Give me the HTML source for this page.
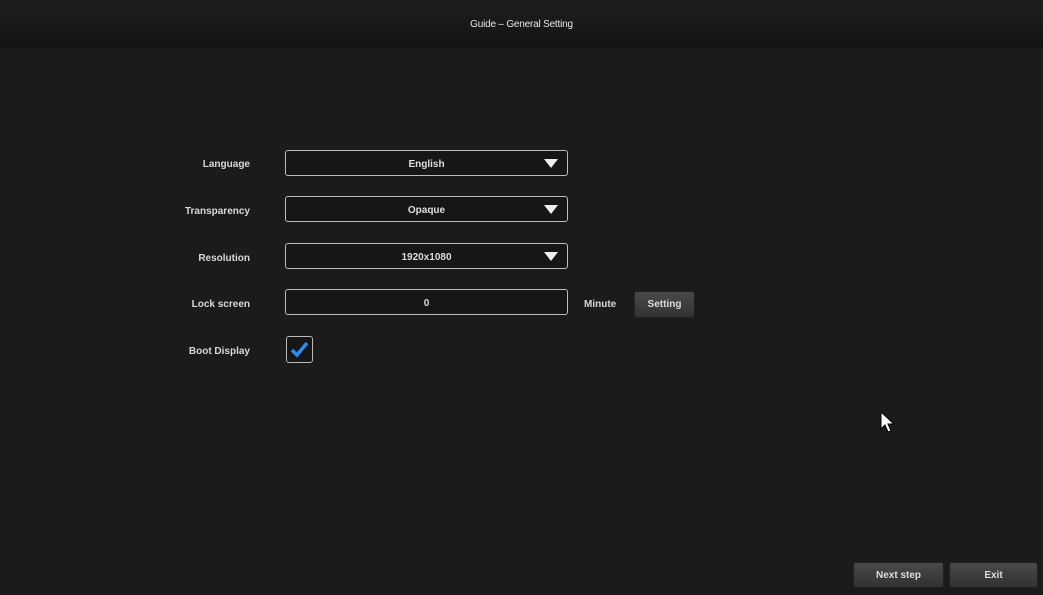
<!DOCTYPE html>
<html><head><style>
body{margin:0;width:1043px;height:595px;background:#1b1b1b;font-family:"Liberation Sans",sans-serif;color:#ddd;position:relative;overflow:hidden;font-size:10px}
.hdr{position:absolute;left:0;top:0;width:1043px;height:48px;background:linear-gradient(#1e1e1e,#131313);}
.hdr span{position:absolute;left:0;width:1043px;top:19px;text-align:center;font-size:10px;color:#e6e6e6;letter-spacing:-0.2px}
.lbl{position:absolute;right:793px;font-weight:bold;font-size:10px;color:#d8d8d8;text-align:right}
.fld{position:absolute;left:285px;width:281px;height:24px;border:1px solid #bbb;border-radius:3px;background:#161616;text-align:center;line-height:28px;font-weight:bold;color:#ddd}
.tri{position:absolute;right:9px;top:8px;width:0;height:0;border-left:7px solid transparent;border-right:7px solid transparent;border-top:9px solid #eee}
.btn{position:absolute;border-radius:3px;background:linear-gradient(#4a4a4a,#323232);border:1px solid #222;color:#ddd;font-weight:bold;text-align:center;font-size:10px}
.cb{position:absolute;left:286px;top:336px;width:25px;height:25px;border:1px solid #bbb;border-radius:3px;background:#161616}
</style></head><body>
<div class="hdr"><span>Guide – General Setting</span></div>
<div class="lbl" style="top:159px">Language</div>
<div class="lbl" style="top:206px">Transparency</div>
<div class="lbl" style="top:253px">Resolution</div>
<div class="lbl" style="top:299px">Lock screen</div>
<div class="lbl" style="top:346px">Boot Display</div>
<div class="fld" style="top:150px">English<div class="tri"></div></div>
<div class="fld" style="top:196px">Opaque<div class="tri"></div></div>
<div class="fld" style="top:243px">1920x1080<div class="tri"></div></div>
<div class="fld" style="top:289px">0</div>
<div style="position:absolute;left:584px;top:299px;font-weight:bold;color:#d8d8d8">Minute</div>
<div class="btn" style="left:634px;top:291px;width:59px;height:25px;line-height:26px">Setting</div>
<div class="cb"><svg width="25" height="25" viewBox="0 0 25 25"><path d="M5 13 L10 18 L20 6" stroke="#2a8cf0" stroke-width="3.5" fill="none"/></svg></div>
<svg style="position:absolute;left:880px;top:411px" width="18" height="24" viewBox="0 0 18 24"><path d="M1 1 L1 18 L5 14 L8 21 L11 20 L8 13 L14 13 Z" fill="#fff" stroke="#000" stroke-width="1"/></svg>
<div class="btn" style="left:853px;top:562px;width:89px;height:24px;line-height:25px">Next step</div>
<div class="btn" style="left:949px;top:562px;width:87px;height:24px;line-height:25px">Exit</div>
</body></html>
